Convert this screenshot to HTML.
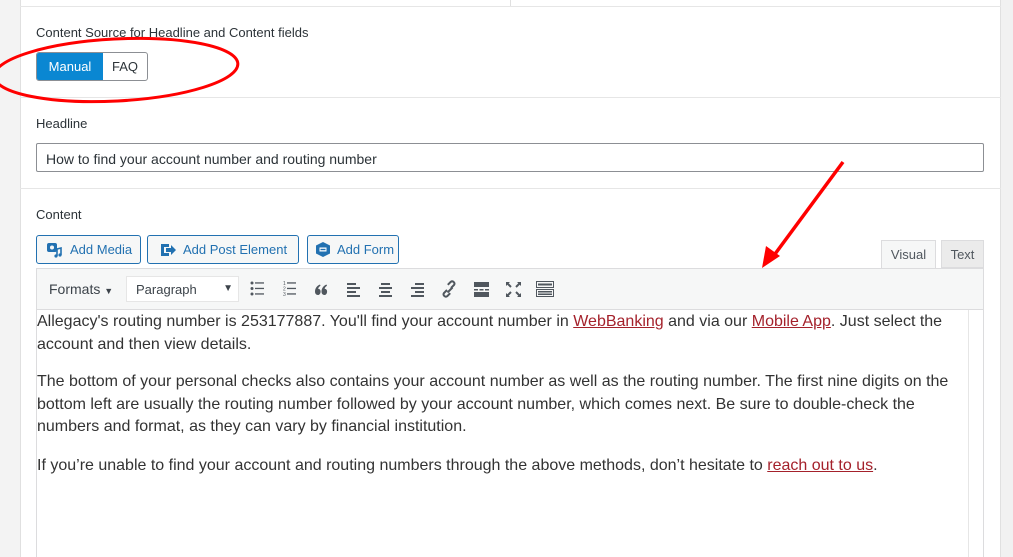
<!DOCTYPE html>
<html><head><meta charset="utf-8">
<style>
*{box-sizing:border-box;margin:0;padding:0}
body{width:1013px;height:557px;overflow:hidden;background:#f1f1f1;font-family:"Liberation Sans",Arial,sans-serif;position:relative;color:#1d2327}
.a{position:absolute}
.panel{left:20px;top:0;width:981px;height:557px;background:#fff;border-left:1px solid #e0e0e0;border-right:1px solid #e0e0e0}
.hr{position:absolute;left:20px;width:981px;height:1px;background:#e6e6e6}
.lbl{font-size:13px;color:#2c3338}
.btn{position:absolute;top:235px;height:29px;border:1px solid #2271b1;border-radius:3px;background:#f6f7f7;color:#2271b1;font-size:13px;display:flex;align-items:center;gap:7px;padding-left:9px}
.ic{position:absolute;top:280px}
p.t{font-family:"Liberation Sans",Helvetica,sans-serif;font-size:16px;line-height:22.5px;color:#333}
a{color:#a4212b;text-decoration:underline}
</style></head><body>
<div class="a" style="left:0;top:0;width:20px;height:557px;background:#f3f3f3"></div>
<div class="a panel"></div>
<div class="hr" style="top:6px"></div>
<div class="a" style="left:510px;top:0;width:1px;height:6px;background:#e0e0e0"></div>
<div class="a lbl" style="left:36px;top:25px">Content Source for Headline and Content fields</div>
<div class="a" style="left:36px;top:52px;width:112px;height:29px;border:1px solid #8c8f94;border-radius:3px;overflow:hidden;display:flex;font-size:13px">
 <div style="width:66px;background:#0a87d2;color:#fff;display:flex;align-items:center;justify-content:center">Manual</div>
 <div style="flex:1;display:flex;align-items:center;justify-content:center;color:#2c3338">FAQ</div>
</div>
<div class="hr" style="top:97px"></div>
<div class="a lbl" style="left:36px;top:116px">Headline</div>
<div class="a" style="left:36px;top:143px;width:948px;height:29px;border:1px solid #8c8f94;border-radius:2px;font-size:14px;padding:7px 0 0 9px;color:#2c3338">How to find your account number and routing number</div>
<div class="hr" style="top:188px"></div>
<div class="a lbl" style="left:36px;top:207px">Content</div>

<div class="btn" style="left:36px;width:105px"><svg width="17" height="17" viewBox="0 0 17 17"><rect x="1" y="2" width="10" height="9" rx="2" fill="#2271b1"/><circle cx="6" cy="6.5" r="2" fill="#f6f7f7"/><path d="M11 8v7M11 8l4-1v7" stroke="#2271b1" stroke-width="1.6" fill="none"/><circle cx="10" cy="15" r="1.6" fill="#2271b1"/><circle cx="14" cy="14" r="1.6" fill="#2271b1"/></svg>Add Media</div>
<div class="btn" style="left:147px;width:152px;padding-left:12px"><svg width="16" height="14" viewBox="0 0 16 14"><path d="M1 1h8v3H4v6h5v3H1z" fill="#2271b1"/><path d="M6 5h5V2l5 5-5 5V9H6z" fill="#2271b1"/></svg>Add Post Element</div>
<div class="btn" style="left:307px;width:92px;padding-left:8px"><svg width="14" height="15" viewBox="0 0 14 15"><path d="M7 0l7 3.5v8L7 15 0 11.5v-8z" fill="#2271b1"/><rect x="3.5" y="5.5" width="7" height="4" fill="#fff"/><rect x="4.5" y="6.8" width="5" height="1.4" fill="#2271b1"/></svg>Add Form</div>

<div class="a" style="left:881px;top:240px;width:55px;height:29px;background:#f6f7f7;border:1px solid #dcdcde;border-bottom:none;font-size:13px;color:#50575e;text-align:center;padding-top:6px">Visual</div>
<div class="a" style="left:941px;top:240px;width:43px;height:28px;background:#ebebeb;border:1px solid #dcdcde;font-size:13px;color:#50575e;text-align:center;padding-top:6px">Text</div>

<div class="a" style="left:36px;top:268px;width:948px;height:289px;border:1px solid #dcdcde;border-bottom:none"></div>
<div class="a" style="left:37px;top:269px;width:946px;height:41px;background:#f6f7f7;border-bottom:1px solid #dcdcde"></div>
<div class="a" style="left:49px;top:281px;font-size:14px;color:#3c434a">Formats <span style="font-size:9px">▼</span></div>
<div class="a" style="left:126px;top:276px;width:113px;height:26px;background:#fff;border:1px solid #e6e6e6;font-size:13px;color:#3c434a;padding:5px 0 0 9px">Paragraph<span style="position:absolute;right:5px;top:6px;font-size:10px">▼</span></div>
<svg class="ic" style="left:250px" width="305" height="18" viewBox="0 0 305 18" fill="#50575e">
 <circle cx="2" cy="3" r="1.5"/><circle cx="2" cy="8.5" r="1.5"/><circle cx="2" cy="14" r="1.5"/><rect x="5" y="2.3" width="9" height="1.3"/><rect x="5" y="7.8" width="9" height="1.3"/><rect x="5" y="13.3" width="9" height="1.3"/>
 <text x="33" y="5" font-size="5" font-family="Liberation Sans">1</text><text x="33" y="10.5" font-size="5" font-family="Liberation Sans">2</text><text x="33" y="16" font-size="5" font-family="Liberation Sans">3</text><rect x="37" y="2.3" width="9" height="1.3"/><rect x="37" y="7.8" width="9" height="1.3"/><rect x="37" y="13.3" width="9" height="1.3"/>
 <path d="M68 15c-2 0-3-1.5-3-3.5 0-3 2-6 5-7l.5 1.2c-1.5 1-2.3 2-2.3 3.2 1.5 0 2.4 1 2.4 2.7S69.5 15 68 15zm6.5 0c-2 0-3-1.5-3-3.5 0-3 2-6 5-7l.5 1.2c-1.5 1-2.3 2-2.3 3.2 1.5 0 2.4 1 2.4 2.7S76 15 74.5 15z"/>
 <rect x="97" y="3" width="9" height="2"/><rect x="97" y="7" width="13" height="2"/><rect x="97" y="11" width="9" height="2"/><rect x="97" y="15" width="13" height="2"/>
 <rect x="131" y="3" width="9" height="2"/><rect x="129" y="7" width="13" height="2"/><rect x="131" y="11" width="9" height="2"/><rect x="129" y="15" width="13" height="2"/>
 <rect x="165" y="3" width="9" height="2"/><rect x="161" y="7" width="13" height="2"/><rect x="165" y="11" width="9" height="2"/><rect x="161" y="15" width="13" height="2"/>
 <path d="M197 10l-3 3a2.3 2.3 0 0 0 3.2 3.2l3-3M201 8l3-3a2.3 2.3 0 0 0-3.2-3.2l-3 3M197.5 12.5l5-5" stroke="#50575e" stroke-width="2" fill="none"/>
 <rect x="224" y="2" width="15" height="5"/><rect x="224" y="9" width="4" height="1.5"/><rect x="229.5" y="9" width="4" height="1.5"/><rect x="235" y="9" width="4" height="1.5"/><rect x="224" y="12" width="15" height="5"/>
 <path d="M256 2h4l-1.3 1.3 3 3-1.4 1.4-3-3L256 6zM271 2v4l-1.3-1.3-3 3-1.4-1.4 3-3L267 2zM256 17v-4l1.3 1.3 3-3 1.4 1.4-3 3L260 17zM271 17h-4l1.3-1.3-3-3 1.4-1.4 3 3L271 13z"/>
 <rect x="286.5" y="1.5" width="17" height="6" stroke="#50575e" fill="none"/><rect x="286.5" y="9.5" width="17" height="7" stroke="#50575e" fill="none"/>
 <rect x="288" y="3.5" width="14" height="2"/><rect x="288" y="11" width="14" height="1.5"/><rect x="288" y="13.5" width="14" height="1.5"/>
</svg>
<div class="a" style="left:968px;top:310px;width:1px;height:247px;background:#e6e6e6"></div>
<div class="a" style="left:37px;top:311px;width:930px">
<p class="t">Allegacy's routing number is 253177887. You'll find your account number in <a>WebBanking</a> and via our <a>Mobile App</a>. Just select the account and then view details.</p>
<p class="t" style="margin-top:15px">The bottom of your personal checks also contains your account number as well as the routing number. The first nine digits on the bottom left are usually the routing number followed by your account number, which comes next. Be sure to double-check the numbers and format, as they can vary by financial institution.</p>
<p class="t" style="margin-top:16px">If you’re unable to find your account and routing numbers through the above methods, don’t hesitate to <a>reach out to us</a>.</p>
</div>

<svg class="a" style="left:0;top:0" width="1013" height="557" fill="none">
 <ellipse cx="116" cy="70" rx="122" ry="31" stroke="#f00" stroke-width="3" transform="rotate(-3 116 70)"/>
 <path d="M843 162L775 254" stroke="#f00" stroke-width="3.5"/>
 <path d="M762 268l4-22 14 10z" fill="#f00"/>
</svg>
</body></html>
